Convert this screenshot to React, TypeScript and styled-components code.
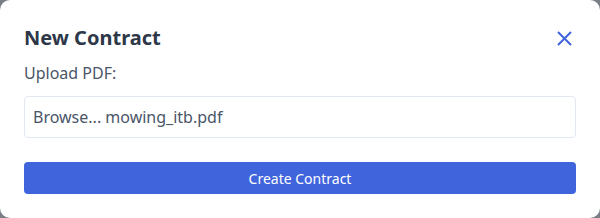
import styled, { createGlobalStyle } from "styled-components";

const GlobalStyle = createGlobalStyle`
  html, body {
    margin: 0;
    padding: 0;
    background: #7a7f87;
    font-family: "Noto Sans", "Open Sans", sans-serif;
  }
`;

const Modal = styled.div`
  width: 600px;
  height: 218px;
  box-sizing: border-box;
  background: #ffffff;
  border-radius: 10px;
  padding: 24px;
  display: flex;
  flex-direction: column;
`;

const Header = styled.div`
  display: flex;
  align-items: center;
  justify-content: space-between;
  height: 28px;
  margin-bottom: 10px;
`;

const Title = styled.h2`
  margin: 0;
  font-size: 20px;
  line-height: 28px;
  font-weight: 700;
  color: #2d3748;
`;

const CloseButton = styled.button`
  border: none;
  background: none;
  padding: 0;
  margin-right: 4px;
  width: 16px;
  height: 16px;
  display: flex;
  align-items: center;
  justify-content: center;
  color: #4064dc;
  cursor: pointer;
`;

const Label = styled.label`
  font-size: 16px;
  line-height: 22px;
  color: #4a5568;
  margin-bottom: 12px;
`;

const FileBox = styled.div`
  height: 42px;
  box-sizing: border-box;
  border: 1px solid #e2e8f0;
  border-radius: 4px;
  padding: 0 8px;
  display: flex;
  align-items: center;
  font-size: 16px;
  color: #4a5568;
  margin-bottom: 24px;
`;

const SubmitButton = styled.button`
  height: 32px;
  border: none;
  border-radius: 4px;
  background: #4064dc;
  color: #ffffff;
  font-family: inherit;
  font-size: 14px;
  cursor: pointer;
`;

const App = () => {
  return (
    <>
      <GlobalStyle />
      <Modal>
        <Header>
          <Title>New Contract</Title>
          <CloseButton aria-label="Close">
            <svg width="15" height="15" viewBox="0 0 15 15" fill="none">
              <path d="M1 1L14 14M14 1L1 14" stroke="currentColor" strokeWidth="2" />
            </svg>
          </CloseButton>
        </Header>
        <Label htmlFor="pdf">Upload PDF:</Label>
        <FileBox id="pdf">Browse... mowing_itb.pdf</FileBox>
        <SubmitButton type="submit">Create Contract</SubmitButton>
      </Modal>
    </>
  );
};

export default App;
